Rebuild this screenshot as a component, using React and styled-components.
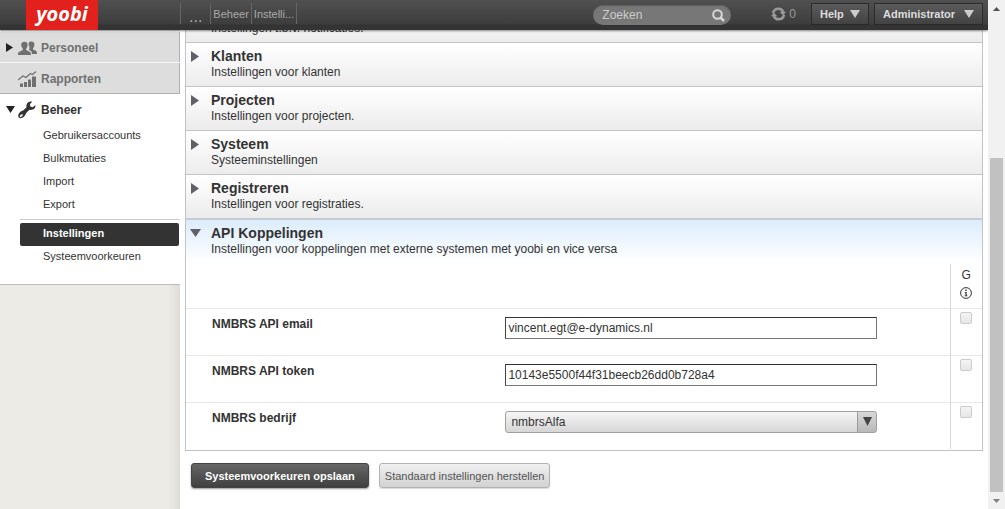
import React, { useState } from "react";
import styled, { createGlobalStyle, css } from "styled-components";

const Global = createGlobalStyle`
  *, *::before, *::after { box-sizing: border-box; }
  body { margin: 0; background: #fff; color: #333; font: 12px/16px "Liberation Sans", Arial, sans-serif; }
  button, input, select { font: inherit; color: inherit; margin: 0; }
  a { color: inherit; text-decoration: none; }
`;

const Window = styled.div`
  display: grid;
  grid-template-columns: minmax(0, 1fr) 17px;
  height: 100vh;
  overflow: hidden;
`;

const Page = styled.div`
  position: relative;
  display: flex;
  min-width: 0;
  overflow: hidden;
`;

/* Top bar, drawn over the scrolled content */
const TopBar = styled.header`
  position: absolute;
  z-index: 2;
  top: 0;
  left: 0;
  right: 0;
  display: flex;
  align-items: flex-start;
  height: 30px;
  background: linear-gradient(#505050 0, #3d3d3d 24px, #333 25px, #343434 100%);
  box-shadow: 0 1px 2px rgba(0, 0, 0, 0.45);
  color: #aaa;
`;

const LogoArea = styled.div`
  width: 180px;
  padding-left: 26px;
`;

const Logo = styled.a`
  display: block;
  width: 72px;
  height: 30px;
  background: #e2211c;
  color: #fff;
  font: italic bold 20px/28px "Open Sans", sans-serif;
  text-align: center;
`;

const Crumbs = styled.nav`
  display: flex;
  flex: 1;
  margin-top: 3px;
  font-size: 11px;
  line-height: 22px;
`;

const Crumb = styled.a`
  height: 21px;
  padding: 0 2px;
  border-left: 1px solid #666;
  &:first-child { padding: 4px 8px 0; font-size: 16px; line-height: 20px; }
  &:last-child { border-right: 1px solid #666; }
`;

const Search = styled.label`
  display: flex;
  align-items: center;
  width: 138px;
  height: 20px;
  margin: 5px 40px 0 0;
  padding: 0 6px 0 9px;
  border-radius: 10px;
  background: #777;
  box-shadow: inset 0 1px 1px #5d5d5d;
`;

const SearchInput = styled.input`
  flex: 1;
  min-width: 0;
  padding: 0;
  border: 0;
  outline: 0;
  background: transparent;
  &::placeholder { color: #ccc; opacity: 1; }
`;

const Sync = styled.div`
  display: flex;
  align-items: center;
  gap: 3px;
  height: 28px;
  margin-right: 15px;
  color: #999;
`;

const MenuButton = styled.button`
  display: flex;
  align-items: center;
  justify-content: space-between;
  width: ${(p) => p.$width}px;
  height: 22px;
  margin: 3px 5px 0 0;
  padding: 0 8px;
  border: 1px solid #2b2b2b;
  background: linear-gradient(#5b5b5b, #424242);
  color: #ddd;
  font-size: 11px;
  font-weight: bold;
`;

/* Sidebar */
const Sidebar = styled.aside`
  flex: 0 0 180px;
  padding-top: 32px;
  background: linear-gradient(to right, #ecebe5 0, #ecebe5 168px, #dddcd6 180px);
`;

const NavLink = styled.a`
  display: grid;
  grid-template-columns: 18px 23px 1fr;
  align-items: center;
  height: 31px;
  color: #333;
  font-weight: bold;
  ${(p) =>
    !p.$open &&
    css`
      padding-top: 1px;
      border: solid #b0b0b0;
      border-width: 0 1px 1px 0;
      background: #ddd;
      box-shadow: 0 -1px #f8f8f8;
      color: #707070;
    `}
  svg:first-child { margin-left: 6px; }
`;

const OpenGroup = styled.div`
  height: 191px;
  border-bottom: 1px solid #bbb;
  background: #fff;
`;

const SubLink = styled.a`
  display: block;
  height: 23px;
  margin-left: 20px;
  padding-left: 23px;
  font-size: 11px;
  line-height: 20px;
  ${(p) =>
    p.$active &&
    css`
      margin-right: 1px;
      border-radius: 2px;
      background: #333;
      color: #fff;
      font-weight: bold;
      line-height: 21px;
    `}
`;

const SubDivider = styled.hr`
  margin: 2px 0 3px 20px;
  border: 0;
  border-top: 1px solid #ccc;
`;

/* Content */
const Main = styled.main`
  flex: 1;
  min-width: 0;
  padding: 0 5px;
  background: #fff;
`;

const Panel = styled.div`
  padding-bottom: 1px;
  border: 1px solid #bfc2c6;
  border-top: 0;
`;

const Section = styled.button`
  display: grid;
  grid-template-columns: 25px 1fr;
  width: 100%;
  height: 44px;
  padding: 5px 0 0;
  border: 0;
  border-top: 1px solid #c4c4c4;
  background: linear-gradient(#fff, #ececec);
  text-align: left;
  align-content: start;
  svg { margin: 3px 0 0 5px; }
  ${(p) =>
    p.$open &&
    css`
      height: 46px;
      border-top: 2px solid #c5cbd0;
      background: linear-gradient(#dcecfc, #fff 42px);
      svg { margin: 4px 0 0 4px; }
    `}
`;

/* Section whose upper part has scrolled under the top bar */
const ScrolledSection = styled.button`
  display: block;
  width: 100%;
  height: 42px;
  padding: 21px 0 6px 25px;
  border: 0;
  background: linear-gradient(#fff, #ececec);
  text-align: left;
`;

const SectionTitle = styled.strong`
  display: block;
  font-size: 14px;
  line-height: 17px;
`;

const SectionText = styled.span`
  display: block;
  line-height: 15px;
`;

const Settings = styled.table`
  width: 100%;
  table-layout: fixed;
  border-collapse: collapse;
  th, td { padding: 0; vertical-align: top; text-align: left; }
  tr + tr, tbody tr { border-top: 1px solid #e8e8e8; }
`;

const LabelCell = styled.th`
  width: 40%;
  label { display: block; padding: 7px 0 0 26px; }
`;

const FieldCell = styled.td`
  && { padding: 8px 73px 0 1px; }
`;

const FlagCell = styled.td`
  width: 32px;
  height: 47px;
  border-left: 1px solid #d8d8d8;
`;

const FlagHead = styled.th`
  width: 32px;
  height: 44px;
  border-left: 1px solid #d8d8d8;
  font-weight: normal;
  && { text-align: center; padding-top: 3px; }
  svg { display: block; margin: 4px auto 0; }
`;

const TextInput = styled.input`
  display: block;
  width: 100%;
  height: 22px;
  padding: 0 2px;
  border: 1px solid #777;
  border-top-color: #333;
  border-left-color: #444;
  background: #fff;
`;

const SelectBox = styled.div`
  position: relative;
  svg { position: absolute; right: 5px; top: 6px; pointer-events: none; }
`;

const Select = styled.select`
  display: block;
  width: 100%;
  height: 22px;
  padding: 0 24px 0 5px;
  border: 1px solid #a0a0a0;
  border-radius: 3px;
  appearance: none;
  background:
    linear-gradient(#999, #999) right 18px top / 1px 100% no-repeat,
    linear-gradient(#d8d8d8, #b8b8b8) right top / 18px 100% no-repeat,
    linear-gradient(#f6f6f6, #d6d6d6);
`;

const Check = styled.input`
  display: block;
  width: 12px;
  height: 12px;
  margin: 3px 0 0 9px;
  border: 1px solid #ccc;
  border-radius: 2px;
  appearance: none;
  background: linear-gradient(#f4f4f4, #e6e6e6);
  &:checked { background: #999; }
`;

const Actions = styled.div`
  display: flex;
  gap: 10px;
  padding: 12px 6px;
`;

const Action = styled.button`
  height: 25px;
  padding: 0 5px;
  border: 1px solid #b2b2b2;
  border-radius: 3px;
  background: linear-gradient(#f0f0f0, #d2d2d2);
  box-shadow: 0 1px 1px rgba(0, 0, 0, 0.15);
  color: #555;
  font-size: 11px;
  ${(p) =>
    p.$primary &&
    css`
      padding: 0 13px;
      border-color: #444;
      background: linear-gradient(#666, #404040);
      box-shadow: 0 1px 2px rgba(0, 0, 0, 0.4);
      color: #fff;
      font-weight: bold;
    `}
`;

/* Scroll bar */
const ScrollBar = styled.div`
  display: grid;
  grid-template-rows: 17px 141fr 334fr 17px;
  background: #f1f1f1;
  svg { margin: auto; }
  svg:last-child { grid-row: 4; }
`;

const Thumb = styled.div`
  grid-row: 3;
  margin: 0 2px;
  background: #c1c1c1;
`;

const Right = ({ w = 8, h = 11, color = "#606066" }) => (
  <svg width={w} height={h} viewBox="0 0 8 11" preserveAspectRatio="none" fill={color} aria-hidden="true">
    <path d="M0 0L8 5.5L0 11Z" />
  </svg>
);

const Down = ({ w = 9, h = 8, color = "#444" }) => (
  <svg width={w} height={h} viewBox="0 0 10 8" preserveAspectRatio="none" fill={color} aria-hidden="true">
    <path d="M0 0H10L5 8Z" />
  </svg>
);

const People = () => (
  <svg width="19" height="14" viewBox="0 0 19 14" fill="#707070" aria-hidden="true">
    <path d="M10.500 3.400C10.500 1.200 11.800 .5 13.400 .5C15.300 .5 16.400 1.500 16.400 3.700C16.400 5.200 15.700 6.400 15 7.200V8.600L17.800 9.800C18.700 10.300 19 11 19 13H14C14 10.800 13.400 9.900 11 8.900C12 7 11.400 5 10.500 3.400Z" />
    <path d="M3.200 4C3.200 1.700 4.500 .7 6.500 .7C8.500 .7 9.600 1.700 9.600 4C9.600 5.600 8.900 6.800 8.200 7.600V9.100L11.600 10.700C12.800 11.300 13 12 13 14H0C0 12 .2 11.300 1.400 10.700L4.800 9.100V7.600C4.100 6.800 3.200 5.600 3.200 4Z" />
  </svg>
);

const Chart = () => (
  <svg width="19" height="16" viewBox="0 0 19 16" fill="#707070" aria-hidden="true">
    <path d="M2 12.500H5V16H2ZM6 11H9V16H6ZM10 8.500H13V16H10ZM14 5.500H18V16H14Z" />
    <path d="M0 9L5 5L8 6.500L12.500 2.500L14.500 3.500L18 .5" fill="none" stroke="#707070" strokeWidth="1.300" />
  </svg>
);

const Wrench = () => (
  <svg width="18" height="18" viewBox="0 0 18 18" aria-hidden="true">
    <path
      fill="#333"
      fillRule="evenodd"
      d="M17.300 4.200L14.700 6.200L12.300 5.600L11.900 3.300L14.200 .8C11.800 .1 9.200 1.400 8.600 3.700C8.300 4.700 8.300 5.400 8.500 6.200L5.200 9.500C3.800 9.900 2.600 10.500 1.700 11.600C.1 13.400 -.2 15.500 .7 16.600C1.900 17.800 4.600 17.200 6.100 15.500C7.400 14 7.900 12.900 8.200 11.900L11.400 8.800C13 9.300 15 9 16.400 7.600C17.300 6.700 17.700 5.400 17.300 4.200ZM1.500 15.500L3 13.400L4.800 13.200L4.600 14.800L2.600 16.300Z"
    />
  </svg>
);

const Magnifier = () => (
  <svg width="13" height="13" viewBox="0 0 13 13" fill="none" stroke="#d8d8d8" strokeWidth="2" aria-hidden="true">
    <circle cx="5.500" cy="5.500" r="4.300" />
    <path d="M8.600 8.600L12 12" strokeWidth="2.500" />
  </svg>
);

const SyncIcon = () => (
  <svg width="15" height="14" viewBox="0 0 15 14" aria-hidden="true">
    <g fill="none" stroke="#999" strokeWidth="2.600">
      <path d="M2 6.200C2.500 3.300 4.800 1.700 7.500 1.700C9.600 1.700 11.400 2.800 12.200 5" />
      <path d="M13 7.800C12.500 10.700 10.200 12.300 7.500 12.300C5.400 12.300 3.600 11.200 2.800 9" />
    </g>
    <path fill="#999" d="M8.600 4.800H15L12 8.600ZM6.400 9.200H0L3 5.400Z" />
  </svg>
);

const Info = () => (
  <svg width="12" height="12" viewBox="0 0 12 12" aria-hidden="true">
    <circle cx="6" cy="6" r="5.400" fill="none" stroke="#333" strokeWidth="1" />
    <path fill="#333" d="M5.300 2.500H6.700V3.900H5.300ZM4.600 4.900H6.700V8.500H7.500V9.300H4.500V8.500H5.400V5.700H4.600Z" />
  </svg>
);

const sections = [
  ["Klanten", "Instellingen voor klanten"],
  ["Projecten", "Instellingen voor projecten."],
  ["Systeem", "Systeeminstellingen"],
  ["Registreren", "Instellingen voor registraties."],
  ["API Koppelingen", "Instellingen voor koppelingen met externe systemen met yoobi en vice versa"],
];

function SettingRow({ id, label, children }) {
  return (
    <tr>
      <LabelCell scope="row"><label htmlFor={id}>{label}</label></LabelCell>
      <FieldCell>{children}</FieldCell>
      <FlagCell><Check type="checkbox" aria-label={`${label} G`} /></FlagCell>
    </tr>
  );
}

export default function App() {
  const [email, setEmail] = useState("vincent.egt@e-dynamics.nl");
  const [token, setToken] = useState("10143e5500f44f31beecb26dd0b728a4");

  return (
    <Window>
      <Global />
      <Page>
        <TopBar>
          <LogoArea><Logo href="#">yoobi</Logo></LogoArea>
          <Crumbs>
            <Crumb href="#">...</Crumb>
            <Crumb href="#">Beheer</Crumb>
            <Crumb href="#">Instelli...</Crumb>
          </Crumbs>
          <Search>
            <SearchInput type="text" placeholder="Zoeken" aria-label="Zoeken" />
            <Magnifier />
          </Search>
          <Sync><SyncIcon />0</Sync>
          <MenuButton $width={58}>Help<Down w={10} color="#ccc" /></MenuButton>
          <MenuButton $width={109}>Administrator<Down w={10} color="#ccc" /></MenuButton>
        </TopBar>

        <Sidebar>
          <NavLink href="#"><Right w={7} h={9} color="#222" /><People />Personeel</NavLink>
          <NavLink href="#"><span /><Chart />Rapporten</NavLink>
          <OpenGroup>
            <NavLink href="#" $open><Down w={9} h={7} color="#222" /><Wrench />Beheer</NavLink>
            <SubLink href="#">Gebruikersaccounts</SubLink>
            <SubLink href="#">Bulkmutaties</SubLink>
            <SubLink href="#">Import</SubLink>
            <SubLink href="#">Export</SubLink>
            <SubDivider />
            <SubLink href="#" $active>Instellingen</SubLink>
            <SubLink href="#">Systeemvoorkeuren</SubLink>
          </OpenGroup>
        </Sidebar>

        <Main>
          <Panel>
            <ScrolledSection type="button" aria-expanded="false">
              <SectionText>Instellingen t.b.v. notificaties.</SectionText>
            </ScrolledSection>
            {sections.map(([title, text], i) => {
              const open = i === sections.length - 1;
              return (
                <Section key={title} type="button" $open={open} aria-expanded={open}>
                  {open ? <Down w={11} h={8} color="#606066" /> : <Right />}
                  <span>
                    <SectionTitle>{title}</SectionTitle>
                    <SectionText>{text}</SectionText>
                  </span>
                </Section>
              );
            })}
            <Settings>
              <thead>
                <tr>
                  <LabelCell as="td" />
                  <td />
                  <FlagHead scope="col">G<Info /></FlagHead>
                </tr>
              </thead>
              <tbody>
                <SettingRow id="email" label="NMBRS API email">
                  <TextInput id="email" type="text" value={email} onChange={(e) => setEmail(e.target.value)} />
                </SettingRow>
                <SettingRow id="token" label="NMBRS API token">
                  <TextInput id="token" type="text" value={token} onChange={(e) => setToken(e.target.value)} />
                </SettingRow>
                <SettingRow id="company" label="NMBRS bedrijf">
                  <SelectBox>
                    <Select id="company"><option>nmbrsAlfa</option></Select>
                    <Down w={9} h={9} />
                  </SelectBox>
                </SettingRow>
              </tbody>
            </Settings>
          </Panel>
          <Actions>
            <Action type="button" $primary>Systeemvoorkeuren opslaan</Action>
            <Action type="button">Standaard instellingen herstellen</Action>
          </Actions>
        </Main>
      </Page>
      <ScrollBar aria-hidden="true">
        <svg width="7" height="4" viewBox="0 0 7 4"><path d="M3.500 0L7 4H0Z" fill="#505050" /></svg>
        <Thumb />
        <svg width="7" height="4" viewBox="0 0 7 4"><path d="M0 0H7L3.500 4Z" fill="#808080" /></svg>
      </ScrollBar>
    </Window>
  );
}
